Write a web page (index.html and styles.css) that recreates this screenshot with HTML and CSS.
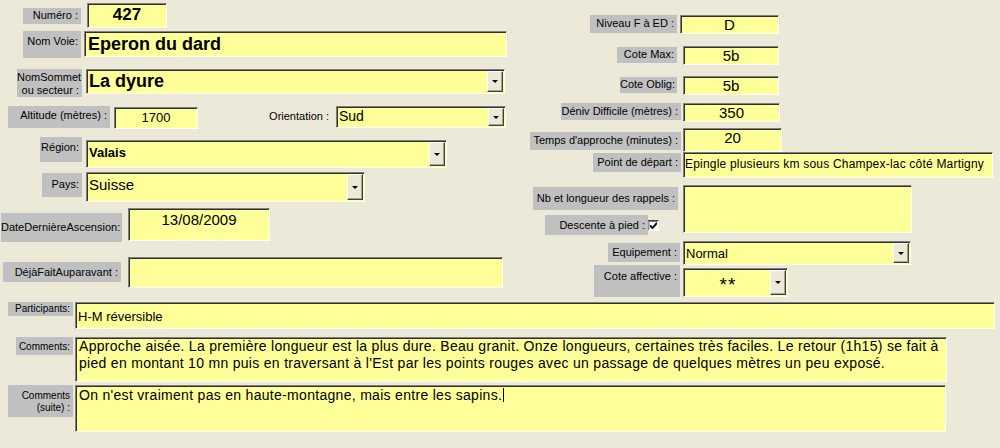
FILE: index.html
```html
<!DOCTYPE html>
<html lang="fr">
<head>
  <meta charset="UTF-8">
  <title>Fiche voie</title>
  <link rel="stylesheet" href="styles.css">
</head>
<body>

<div class="form">
  <div class="top">

    <div class="col-left">
      <div class="row r-numero">
        <div class="lbl lbl-numero">Numéro :</div>
        <div class="box box-numero">427</div>
      </div>
      <div class="row r-voie">
        <div class="lbl lbl-voie">Nom Voie:</div>
        <div class="box box-voie">Eperon du dard</div>
      </div>
      <div class="row r-sommet">
        <div class="lbl lbl-sommet">NomSommet<br>ou secteur :</div>
        <div class="box combo combo-sommet"><span class="val">La dyure</span><span class="drop"></span></div>
      </div>
      <div class="row r-alt">
        <div class="lbl lbl-alt">Altitude (mètres) :</div>
        <div class="box box-alt">1700</div>
        <div class="plain lbl-orient">Orientation :</div>
        <div class="box combo combo-orient"><span class="val">Sud</span><span class="drop"></span></div>
      </div>
      <div class="row r-region">
        <div class="lbl lbl-region">Région:</div>
        <div class="box combo combo-region"><span class="val">Valais</span><span class="drop"></span></div>
      </div>
      <div class="row r-pays">
        <div class="lbl lbl-pays">Pays:</div>
        <div class="box combo combo-pays"><span class="val">Suisse</span><span class="drop"></span></div>
      </div>
      <div class="row r-date">
        <div class="lbl lbl-date">DateDernièreAscension:</div>
        <div class="box box-date">13/08/2009</div>
      </div>
      <div class="row r-deja">
        <div class="lbl lbl-deja">DéjàFaitAuparavant :</div>
        <div class="box box-deja"></div>
      </div>
    </div>

    <div class="col-right">
      <div class="row r-niveau">
        <div class="lbl lbl-niveau">Niveau F à ED :</div>
        <div class="box num box-niveau">D</div>
      </div>
      <div class="row r-max">
        <div class="lbl lbl-max">Cote Max:</div>
        <div class="box num box-max">5b</div>
      </div>
      <div class="row r-oblig">
        <div class="lbl lbl-oblig">Cote Oblig:</div>
        <div class="box num box-oblig">5b</div>
      </div>
      <div class="row r-deniv">
        <div class="lbl lbl-deniv">Déniv Difficile (mètres) :</div>
        <div class="box num box-deniv">350</div>
      </div>
      <div class="row r-temps">
        <div class="lbl lbl-temps">Temps d'approche (minutes) :</div>
        <div class="box num box-temps">20</div>
      </div>
      <div class="row r-depart">
        <div class="lbl lbl-depart">Point de départ :</div>
        <div class="box box-depart">Epingle plusieurs km sous Champex-lac côté Martigny</div>
      </div>
      <div class="row r-rappels">
        <div class="sub">
          <div class="lbl lbl-rappels">Nb et longueur des rappels :</div>
          <div class="descente">
            <div class="lbl lbl-descente">Descente à pied :</div>
            <svg class="check" width="11" height="11" viewBox="0 0 11 11">
              <rect x="0" y="0" width="11" height="11" fill="#fff"/>
              <path d="M0 10.5V0.5H10.5" fill="none" stroke="#404040"/>
              <path d="M1 9.5V1.5H9.5" fill="none" stroke="#808080"/>
              <path d="M2.5 5l2 2 4-4.5v2l-4 4.5-2-2z" fill="#000" stroke="#000" stroke-width="0.8"/>
            </svg>
          </div>
        </div>
        <div class="box box-rappels"></div>
      </div>
      <div class="row r-equip">
        <div class="lbl lbl-equip">Equipement :</div>
        <div class="box combo combo-equip"><span class="val">Normal</span><span class="drop"></span></div>
      </div>
      <div class="row r-affect">
        <div class="lbl lbl-affect">Cote affective :</div>
        <div class="box combo combo-affect"><span class="val">**</span><span class="drop"></span></div>
      </div>
    </div>

  </div>

  <div class="bottom">
    <div class="row r-part">
      <div class="lbl small lbl-part">Participants:</div>
      <div class="box box-part">H-M réversible</div>
    </div>
    <div class="row r-comm">
      <div class="lbl small lbl-comm">Comments:</div>
      <div class="box memo box-comm">Approche aisée. La première longueur est la plus dure. Beau granit. Onze longueurs, certaines très faciles. Le retour (1h15) se fait à pied en montant 10 mn puis en traversant à l'Est par les points rouges avec un passage de quelques mètres un peu exposé.</div>
    </div>
    <div class="row r-suite">
      <div class="lbl small lbl-suite">Comments<br>(suite) :</div>
      <div class="box memo box-suite">On n'est vraiment pas en haute-montagne, mais entre les sapins.<span class="caret"></span></div>
    </div>
  </div>
</div>

</body>
</html>
```

FILE: styles.css
```css
body {
  margin: 0;
  background: #ece9d8;
  color: #000;
  font-family: "Liberation Sans", Arial, sans-serif;
  font-size: 11px;
  width: 1000px;
  height: 448px;
  overflow: hidden;
}
.top {
  display: flex;
  height: 297px;
}
.col-left {
  width: 530px;
  flex: none;
}
.col-right {
  flex: 1;
}
.row {
  display: flex;
  align-items: flex-start;
}

/* labels */
.lbl {
  flex: none;
  box-sizing: border-box;
  background: #c0c0c0;
  text-align: right;
  padding: 2px 3px 0 0;
  line-height: 13px;
  white-space: nowrap;
}
.plain {
  flex: none;
  text-align: right;
  line-height: 13px;
  padding-top: 4px;
  white-space: nowrap;
}
.small {
  font-size: 10px;
  line-height: 12px;
}

/* sunken yellow controls */
.box {
  flex: none;
  box-sizing: border-box;
  background: #ffff99;
  border-top: 1px solid #808080;
  border-left: 1px solid #808080;
  border-right: 1px solid #fff;
  border-bottom: 1px solid #fff;
  box-shadow: inset 1px 1px 0 #303030;
  padding: 2px 3px 0 3px;
  overflow: hidden;
  white-space: nowrap;
}
.num {
  text-align: center;
  font-size: 15px;
  line-height: 16px;
  padding: 1px 0 0 0;
}
.combo {
  display: flex;
  padding: 1px 1px 1px 2px;
}
.combo .val {
  flex: 1;
  overflow: hidden;
}
.drop {
  flex: none;
  width: 16px;
  box-sizing: border-box;
  background: #ece9d8;
  border-top: 1px solid #fff;
  border-left: 1px solid #fff;
  border-right: 1px solid #404040;
  border-bottom: 1px solid #404040;
  box-shadow: inset -1px -1px 0 #a0a0a0;
  display: flex;
  align-items: center;
  justify-content: center;
}
.drop::after {
  content: "";
  border-left: 3px solid transparent;
  border-right: 3px solid transparent;
  border-top: 3px solid #000;
}
.memo {
  white-space: normal;
  font-size: 14px;
  letter-spacing: 0.3px;
  line-height: 17px;
  padding: 0 3px 0 3px;
}
.caret {
  display: inline-block;
  width: 1px;
  height: 14px;
  margin-left: 1px;
  background: #000;
  vertical-align: -2px;
}

/* left column */
.r-numero { margin-top: 3px; }
.lbl-numero { margin: 5px 0 0 23px; width: 58px; height: 16px; padding-top: 1px; }
.box-numero {
  margin-left: 6px; width: 80px; height: 25px;
  font-weight: bold; font-size: 17px; text-align: center; line-height: 20px; padding: 1px 0 0 0;
}

.r-voie { margin-top: 3px; }
.lbl-voie { margin-left: 23px; width: 58px; height: 27px; padding-top: 4px; }
.box-voie {
  margin-left: 3px; width: 423px; height: 26px;
  font-weight: bold; font-size: 18px; line-height: 21px;
}

.r-sommet { margin-top: 11px; }
.lbl-sommet { margin-left: 17px; width: 65px; height: 28px; }
.combo-sommet {
  margin-left: 4px; width: 419px; height: 25px;
  font-weight: bold; font-size: 18px; line-height: 21px;
}

.r-alt { margin-top: 9px; }
.lbl-alt { margin-left: 8px; width: 102px; height: 22px; padding-top: 3px; }
.box-alt {
  margin: 1px 0 0 4px; width: 84px; height: 22px;
  font-size: 13px; text-align: center; line-height: 16px; padding: 2px 0 0 0;
}
.lbl-orient { margin-left: 70px; width: 61px; }
.combo-orient {
  margin-left: 7px; width: 170px; height: 22px;
  font-size: 14px; line-height: 16px;
}

.r-region { margin-top: 8px; }
.lbl-region { margin-left: 40px; width: 42px; height: 25px; padding-top: 4px; }
.combo-region {
  margin: 3px 0 0 4px; width: 361px; height: 28px;
  font-weight: bold; font-size: 13px; line-height: 16px;
}
.combo-region .val { padding-top: 3px; }

.r-pays { margin-top: 4px; }
.lbl-pays { margin: 1px 0 0 42px; width: 40px; height: 24px; padding-top: 5px; }
.combo-pays {
  margin-left: 4px; width: 279px; height: 30px;
  font-size: 15px; line-height: 16px;
}
.combo-pays .val { padding-top: 3px; }

.r-date { margin-top: 6px; }
.lbl-date { margin: 5px 0 0 1px; width: 121px; height: 29px; padding-top: 8px; }
.box-date {
  margin-left: 6px; width: 142px; height: 33px;
  font-size: 15px; text-align: center; line-height: 17px; padding: 2px 0 0 0;
}

.r-deja { margin-top: 15px; }
.lbl-deja { margin: 5px 0 0 3px; width: 118px; height: 20px; padding-top: 4px; }
.box-deja { margin-left: 7px; width: 375px; height: 31px; }

/* right column */
.r-niveau { margin-top: 15px; }
.lbl-niveau { margin-left: 60px; width: 87px; height: 18px; }
.box-niveau { margin-left: 3px; width: 99px; height: 19px; }

.r-max { margin-top: 12px; }
.lbl-max { margin: 1px 0 0 87px; width: 60px; height: 16px; padding-top: 1px; }
.box-max { margin-left: 6px; width: 96px; height: 19px; }

.r-oblig { margin-top: 11px; }
.lbl-oblig { margin: 1px 0 0 90px; width: 57px; height: 16px; padding-top: 1px; }
.box-oblig { margin-left: 6px; width: 96px; height: 19px; }

.r-deniv { margin-top: 8px; }
.lbl-deniv { margin-left: 31px; width: 120px; height: 17px; }
.box-deniv { margin-left: 2px; width: 97px; height: 19px; }

.r-temps { margin-top: 6px; }
.lbl-temps { margin-top: 4px; width: 151px; height: 18px; }
.box-temps { margin-left: 2px; width: 99px; height: 24px; }

.lbl-depart { margin: 1px 0 0 63px; width: 88px; height: 19px; padding-top: 3px; }
.box-depart {
  margin-left: 2px; width: 310px; height: 26px;
  font-size: 12px; letter-spacing: 0.2px; line-height: 15px; padding: 4px 1px 0 1px;
}

.r-rappels { margin-top: 7px; }
.sub {
  flex: none;
  width: 153px;
}
.lbl-rappels { margin: 2px 0 0 3px; width: 145px; height: 23px; padding-top: 5px; }
.descente {
  display: flex;
  align-items: flex-start;
  margin-top: 5px;
}
.lbl-descente { margin-left: 15px; width: 103px; height: 20px; padding-top: 4px; }
.check {
  flex: none;
  margin-top: 5px;
}
.box-rappels { width: 229px; height: 48px; }

.r-equip { margin-top: 6px; }
.lbl-equip { margin: 2px 0 0 78px; width: 72px; height: 19px; padding-top: 3px; }
.combo-equip {
  margin-left: 3px; width: 228px; height: 24px;
  font-size: 13px; line-height: 15px;
}
.combo-equip .val { padding-top: 3px; }

.lbl-affect { margin-left: 64px; width: 86px; height: 32px; padding-top: 5px; }
.combo-affect {
  margin: 3px 0 0 3px; width: 105px; height: 29px;
  font-size: 19px; line-height: 17px;
}
.combo-affect .val { text-align: center; letter-spacing: 1px; padding-top: 6px; }

/* bottom */
.bottom { margin-top: 5px; }
.lbl-part { margin-left: 8px; width: 65px; height: 14px; padding-top: 1px; }
.box-part {
  margin-left: 2px; width: 920px; height: 27px;
  font-family: "Liberation Sans Narrow", "Liberation Sans", sans-serif;
  font-stretch: condensed;
  font-size: 13px; line-height: 15px; padding-top: 6px; padding-left: 2px;
}

.r-comm { margin-top: 8px; }
.lbl-comm { margin-left: 16px; width: 57px; height: 18px; padding-top: 4px; }
.box-comm { margin-left: 2px; width: 872px; height: 45px; }

.r-suite { margin-top: 3px; }
.lbl-suite { margin-left: 8px; width: 65px; height: 32px; padding-top: 5px; }
.box-suite { margin-left: 2px; width: 871px; height: 47px; padding-top: 1px; }
```
